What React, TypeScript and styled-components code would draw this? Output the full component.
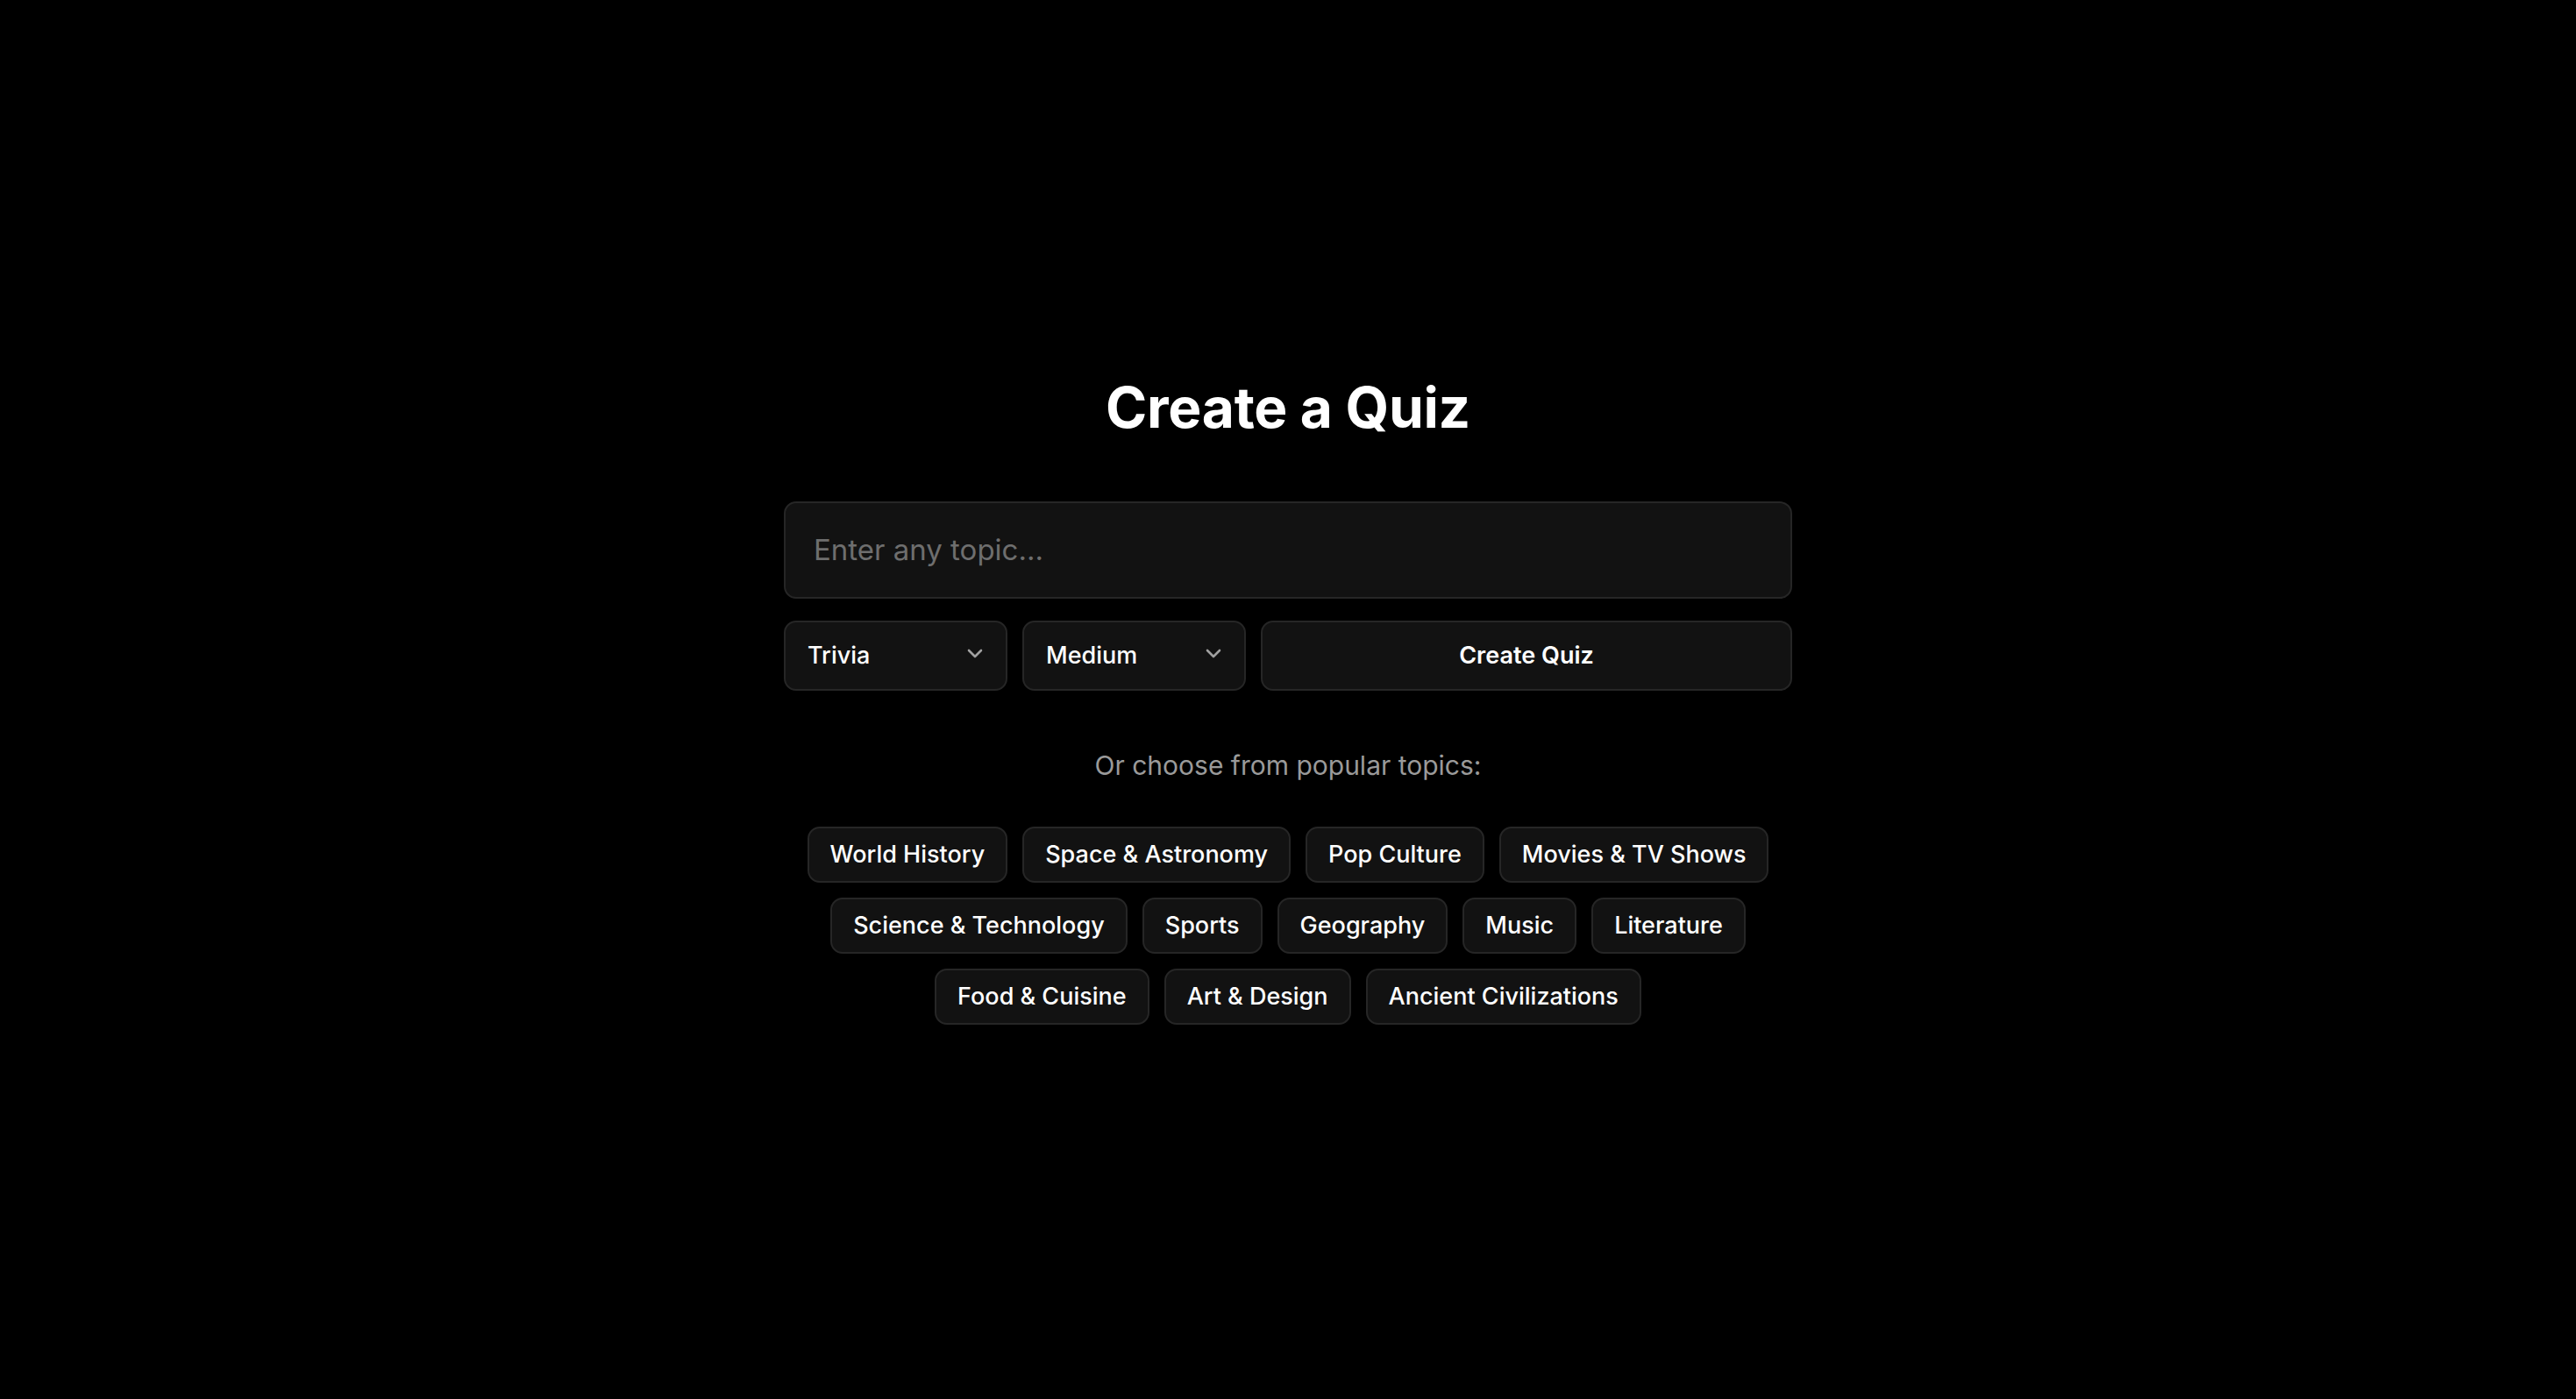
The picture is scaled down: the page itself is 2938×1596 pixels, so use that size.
import React, { useState } from 'react';
import styled, { createGlobalStyle } from 'styled-components';

const GlobalStyle = createGlobalStyle`
  html, body {
    margin: 0;
    padding: 0;
    background: #000;
  }
  body {
    font-family: Inter, "Noto Sans", sans-serif;
    color: #fff;
  }
  * {
    box-sizing: border-box;
  }
`;

const Page = styled.main`
  min-height: 100vh;
  display: flex;
  align-items: center;
  justify-content: center;
`;

const Panel = styled.div`
  width: 1150px;
  display: flex;
  flex-direction: column;
`;

const Title = styled.h1`
  margin: 0 0 68px;
  text-align: center;
  font-size: 64px;
  line-height: 1.2;
  font-weight: 700;
  letter-spacing: -0.3px;
`;

const TopicInput = styled.input`
  width: 100%;
  height: 111px;
  padding: 0 32px;
  background: #121212;
  border: 2px solid #262626;
  border-radius: 14px;
  color: #fff;
  font-family: inherit;
  font-size: 33px;
  outline: none;

  &::placeholder {
    color: #6e6e6e;
  }
`;

const Controls = styled.div`
  display: grid;
  grid-template-columns: 255px 255px 1fr;
  gap: 17px;
  margin-top: 25px;
`;

const SelectBox = styled.div`
  position: relative;
  height: 80px;
`;

const Select = styled.select`
  appearance: none;
  width: 100%;
  height: 100%;
  padding: 0 60px 0 25px;
  background: #121212;
  border: 2px solid #262626;
  border-radius: 14px;
  color: #fff;
  font-family: inherit;
  font-size: 27px;
  font-weight: 500;
  outline: none;
`;

const Chevron = styled.svg`
  position: absolute;
  right: 28px;
  top: 50%;
  width: 18px;
  height: 12px;
  margin-top: -8px;
  pointer-events: none;
`;

const CreateButton = styled.button`
  height: 80px;
  background: #121212;
  border: 2px solid #262626;
  border-radius: 14px;
  color: #fff;
  font-family: inherit;
  font-size: 27px;
  font-weight: 600;
  cursor: pointer;
`;

const Hint = styled.p`
  margin: 63px 0 0;
  text-align: center;
  color: #9a9a9a;
  font-size: 30px;
  line-height: 1.5;
`;

const Chips = styled.div`
  display: flex;
  flex-wrap: wrap;
  justify-content: center;
  gap: 17px;
  margin-top: 47px;
  padding: 0 20px;
`;

const Chip = styled.button`
  height: 64px;
  padding: 0 24px;
  background: #121212;
  border: 2px solid #262626;
  border-radius: 14px;
  color: #fff;
  font-family: inherit;
  font-size: 27px;
  font-weight: 500;
  cursor: pointer;
`;

const topics = [
  'World History',
  'Space & Astronomy',
  'Pop Culture',
  'Movies & TV Shows',
  'Science & Technology',
  'Sports',
  'Geography',
  'Music',
  'Literature',
  'Food & Cuisine',
  'Art & Design',
  'Ancient Civilizations',
];

const Down = () => (
  <Chevron viewBox="0 0 18 12" fill="none">
    <path d="M2 2l7 7 7-7" stroke="#a0a0a0" strokeWidth="2.6" strokeLinecap="round" strokeLinejoin="round" />
  </Chevron>
);

export default function App() {
  const [topic, setTopic] = useState('');
  const [kind, setKind] = useState('Trivia');
  const [level, setLevel] = useState('Medium');

  return (
    <>
      <GlobalStyle />
      <Page>
        <Panel>
          <Title>Create a Quiz</Title>
          <TopicInput
            placeholder="Enter any topic..."
            value={topic}
            onChange={e => setTopic(e.target.value)}
          />
          <Controls>
            <SelectBox>
              <Select value={kind} onChange={e => setKind(e.target.value)}>
                <option>Trivia</option>
                <option>Personality</option>
              </Select>
              <Down />
            </SelectBox>
            <SelectBox>
              <Select value={level} onChange={e => setLevel(e.target.value)}>
                <option>Easy</option>
                <option>Medium</option>
                <option>Hard</option>
              </Select>
              <Down />
            </SelectBox>
            <CreateButton>Create Quiz</CreateButton>
          </Controls>
          <Hint>Or choose from popular topics:</Hint>
          <Chips>
            {topics.map(t => (
              <Chip key={t} onClick={() => setTopic(t)}>
                {t}
              </Chip>
            ))}
          </Chips>
        </Panel>
      </Page>
    </>
  );
}
